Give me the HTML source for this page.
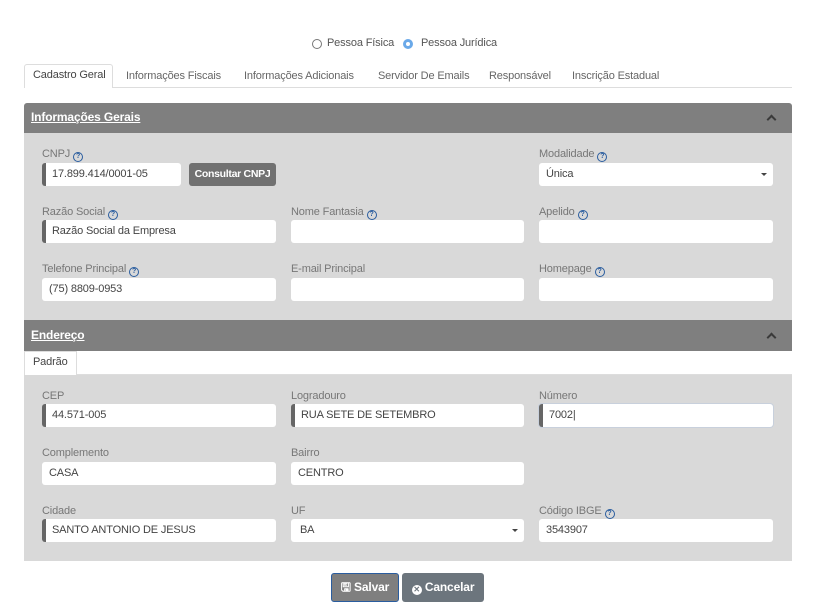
<!DOCTYPE html>
<html><head><meta charset="utf-8"><style>
*{box-sizing:border-box;margin:0;padding:0}
body{width:840px;height:614px;background:#fff;font-family:"Liberation Sans",sans-serif;font-size:11px;color:#555;position:relative;overflow:hidden;letter-spacing:-0.15px}
.a{position:absolute}
.lbl{position:absolute;color:#777;font-size:11px;white-space:nowrap}
.q{display:inline-block;width:10px;height:10px;border:1px solid #2a5d9f;border-radius:50%;font-size:7px;line-height:8px;text-align:center;color:#2a5d9f;font-weight:bold;vertical-align:-1px;margin-left:3px;letter-spacing:0}
.in{position:absolute;height:23px;background:#fff;border-radius:3px;color:#444;font-size:11px;line-height:23px;padding-left:7px;white-space:nowrap}
.in.b{border-left:4px solid #666;padding-left:6px}
.hdr{position:absolute;left:24px;width:768px;background:#7f7f7f;color:#fff;font-weight:bold;font-size:12px;text-decoration:underline;padding-left:7px}
.body{position:absolute;left:24px;width:768px;background:#d9d9d9}
.chev{position:absolute;right:17px;width:7px;height:7px;border-left:2px solid #3a3a3a;border-top:2px solid #3a3a3a;transform:rotate(45deg)}
.caret{position:absolute;right:6px;top:10px;border-left:3px solid transparent;border-right:3px solid transparent;border-top:3px solid #444}
.tab{position:absolute;font-size:11px;color:#666;white-space:nowrap}
</style></head><body>
<div class="a" style="left:312px;top:39px;width:10px;height:10px;border:1px solid #777;border-radius:50%"></div>
<div class="a" style="left:327px;top:37px;color:#555">Pessoa Física</div>
<div class="a" style="left:403px;top:39px;width:10px;height:10px;border:3px solid #6aa9e9;border-radius:50%;background:#fff"></div>
<div class="a" style="left:421px;top:37px;color:#555">Pessoa Jurídica</div>

<div class="a" style="left:24px;top:87px;width:768px;height:1px;background:#ddd"></div>
<div class="a" style="left:24px;top:64px;width:89px;height:24px;border:1px solid #ddd;border-bottom:none;background:#fff;border-radius:3px 3px 0 0"></div>
<div class="tab" style="left:33px;top:69px;color:#444">Cadastro Geral</div>
<div class="tab" style="left:126px;top:70px">Informações Fiscais</div>
<div class="tab" style="left:244px;top:70px">Informações Adicionais</div>
<div class="tab" style="left:378px;top:70px">Servidor De Emails</div>
<div class="tab" style="left:489px;top:70px">Responsável</div>
<div class="tab" style="left:572px;top:70px">Inscrição Estadual</div>

<div class="hdr" style="top:103px;height:30px;line-height:28px;border-radius:3px 3px 0 0">Informações Gerais<div class="chev" style="top:13px"></div></div>
<div class="body" style="top:133px;height:187px"></div>

<div class="lbl" style="left:42px;top:148px">CNPJ<span class="q">?</span></div>
<div class="in b" style="left:42px;top:163px;width:139px">17.899.414/0001-05</div>
<div class="a" style="left:189px;top:163px;width:87px;height:23px;background:#717171;border-radius:3px;color:#fff;font-weight:bold;font-size:10.5px;line-height:23px;text-align:center;letter-spacing:-0.3px">Consultar CNPJ</div>
<div class="lbl" style="left:539px;top:148px">Modalidade<span class="q">?</span></div>
<div class="in" style="left:539px;top:163px;width:234px">Única<div class="caret"></div></div>

<div class="lbl" style="left:42px;top:206px">Razão Social<span class="q">?</span></div>
<div class="in b" style="left:42px;top:220px;width:234px">Razão Social da Empresa</div>
<div class="lbl" style="left:291px;top:206px">Nome Fantasia<span class="q">?</span></div>
<div class="in" style="left:291px;top:220px;width:233px"></div>
<div class="lbl" style="left:539px;top:206px">Apelido<span class="q">?</span></div>
<div class="in" style="left:539px;top:220px;width:234px"></div>

<div class="lbl" style="left:42px;top:263px">Telefone Principal<span class="q">?</span></div>
<div class="in" style="left:42px;top:278px;width:234px">(75) 8809-0953</div>
<div class="lbl" style="left:291px;top:263px">E-mail Principal</div>
<div class="in" style="left:291px;top:278px;width:233px"></div>
<div class="lbl" style="left:539px;top:263px">Homepage<span class="q">?</span></div>
<div class="in" style="left:539px;top:278px;width:234px"></div>

<div class="hdr" style="top:320px;height:31px;line-height:30px">Endereço<div class="chev" style="top:14px"></div></div>
<div class="a" style="left:24px;top:374px;width:768px;height:1px;background:#ddd"></div>
<div class="a" style="left:24px;top:351px;width:53px;height:24px;border:1px solid #ddd;border-bottom:none;background:#fff"></div>
<div class="a" style="left:33px;top:356px;color:#444">Padrão</div>
<div class="body" style="top:375px;height:186px"></div>

<div class="lbl" style="left:42px;top:390px">CEP</div>
<div class="in b" style="left:42px;top:404px;width:234px">44.571-005</div>
<div class="lbl" style="left:291px;top:390px">Logradouro</div>
<div class="in b" style="left:291px;top:404px;width:233px">RUA SETE DE SETEMBRO</div>
<div class="lbl" style="left:539px;top:390px">Número</div>
<div class="in b" style="left:539px;top:404px;width:234px;box-shadow:0 0 0 1px #c8d0dc">7002|</div>

<div class="lbl" style="left:42px;top:447px">Complemento</div>
<div class="in" style="left:42px;top:462px;width:234px">CASA</div>
<div class="lbl" style="left:291px;top:447px">Bairro</div>
<div class="in" style="left:291px;top:462px;width:233px">CENTRO</div>

<div class="lbl" style="left:42px;top:505px">Cidade</div>
<div class="in b" style="left:42px;top:519px;width:234px">SANTO ANTONIO DE JESUS</div>
<div class="lbl" style="left:291px;top:505px">UF</div>
<div class="in" style="left:291px;top:519px;width:233px;padding-left:9px">BA<div class="caret"></div></div>
<div class="lbl" style="left:539px;top:505px">Código IBGE<span class="q">?</span></div>
<div class="in" style="left:539px;top:519px;width:234px">3543907</div>

<div class="a" style="left:331px;top:573px;width:68px;height:29px;background:#7f7f7f;border:1px solid #2a5d9f;border-radius:3px;color:#fff;font-weight:bold;font-size:12px;line-height:27px;text-align:center">&#x1F5AB; Salvar</div>
<div class="a" style="left:402px;top:573px;width:82px;height:29px;background:#6c757d;border-radius:3px;color:#fff;font-weight:bold;font-size:12px;line-height:29px;text-align:center"><span style="display:inline-block;width:10px;height:10px;border-radius:50%;background:#fff;color:#6c757d;font-size:8px;line-height:10px;vertical-align:-1px">✕</span> Cancelar</div>
</body></html>
